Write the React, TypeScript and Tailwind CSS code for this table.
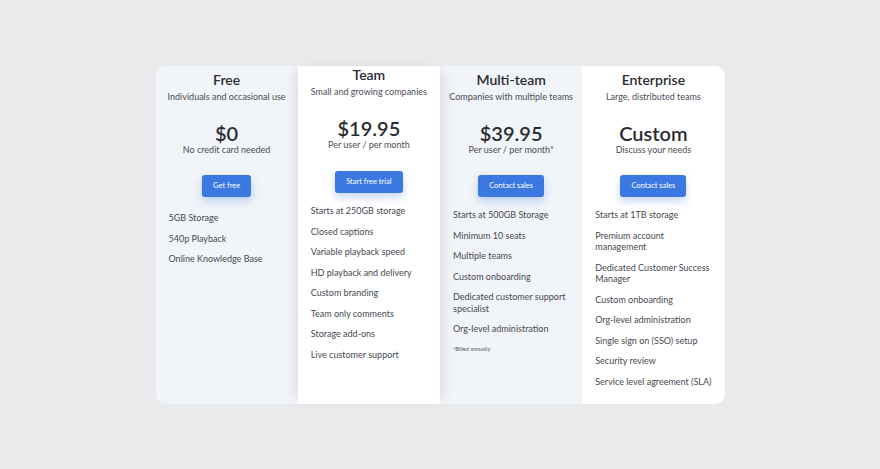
type Plan = {
  name: string;
  blurb: string;
  price: string;
  priceNote: string;
  cta: string;
  features: string[];
  footnote?: string;
};

const plans: Plan[] = [
  {
    name: "Free",
    blurb: "Individuals and occasional use",
    price: "$0",
    priceNote: "No credit card needed",
    cta: "Get free",
    features: ["5GB Storage", "540p Playback", "Online Knowledge Base"],
  },
  {
    name: "Team",
    blurb: "Small and growing companies",
    price: "$19.95",
    priceNote: "Per user / per month",
    cta: "Start free trial",
    features: [
      "Starts at 250GB storage",
      "Closed captions",
      "Variable playback speed",
      "HD playback and delivery",
      "Custom branding",
      "Team only comments",
      "Storage add-ons",
      "Live customer support",
    ],
  },
  {
    name: "Multi-team",
    blurb: "Companies with multiple teams",
    price: "$39.95",
    priceNote: "Per user / per month*",
    cta: "Contact sales",
    features: [
      "Starts at 500GB Storage",
      "Minimum 10 seats",
      "Multiple teams",
      "Custom onboarding",
      "Dedicated customer support specialist",
      "Org-level administration",
    ],
    footnote: "*Billed annually",
  },
  {
    name: "Enterprise",
    blurb: "Large, distributed teams",
    price: "Custom",
    priceNote: "Discuss your needs",
    cta: "Contact sales",
    features: [
      "Starts at 1TB storage",
      "Premium account management",
      "Dedicated Customer Success Manager",
      "Custom onboarding",
      "Org-level administration",
      "Single sign on (SSO) setup",
      "Security review",
      "Service level agreement (SLA)",
    ],
  },
];

function PlanColumn({ plan, index }: { plan: Plan; index: number }) {
  const featured = index === 1;
  const tinted = index === 0 || index === 2;

  return (
    <div
      className={`flex flex-col ${
        featured
          ? "relative z-10 bg-white pt-0 shadow-[8px_0_12px_-6px_rgba(0,0,0,0.12),-8px_0_12px_-6px_rgba(0,0,0,0.12)]"
          : "pt-[5px]"
      } ${tinted ? "bg-[#f1f4f8]" : "bg-white"} ${
        index === 0 ? "rounded-l-[10px]" : ""
      } ${index === 3 ? "rounded-r-[10px]" : ""}`}
    >
      <div className="flex flex-col items-center text-center">
        <h2 className="text-[14px] font-semibold leading-[18px] text-[#2a2c33]">
          {plan.name}
        </h2>
        <p className="text-[9px] leading-[16px] text-[#4a4d55]">{plan.blurb}</p>
        <div className="mt-[16px] text-[20px] font-semibold leading-[24px] text-[#2a2c33]">
          {plan.price}
        </div>
        <p className="text-[9px] leading-[10px] text-[#4a4d55]">{plan.priceNote}</p>
        <button
          className={`${
            featured ? "mt-[21px]" : "mt-[20px]"
          } h-[22px] rounded-[3px] bg-[#3c78e2] px-[11px] text-[7.5px] text-white shadow-[0_4px_8px_rgba(60,120,226,0.3)]`}
        >
          {plan.cta}
        </button>
      </div>

      <ul
        className={`${
          index === 0 ? "mt-[15px]" : "mt-[12px]"
        } flex flex-col gap-[9px] pl-[13px] pr-[10px]`}
      >
        {plan.features.map((f) => (
          <li key={f} className="text-[9px] leading-[11.5px] text-[#464951]">
            {f}
          </li>
        ))}
      </ul>

      {plan.footnote && (
        <p className="mt-[10px] pl-[13px] text-[5.5px] leading-[8px] text-[#55585f]">
          {plan.footnote}
        </p>
      )}
    </div>
  );
}

export default function App() {
  return (
    <main
      className="min-h-screen bg-[#e9eaec] pt-[66px]"
      style={{ fontFamily: "Lato, 'Open Sans', sans-serif" }}
    >
      <div className="mx-auto grid h-[338px] w-[569px] grid-cols-4 rounded-[10px]">
        {plans.map((plan, i) => (
          <PlanColumn key={plan.name} plan={plan} index={i} />
        ))}
      </div>
    </main>
  );
}
